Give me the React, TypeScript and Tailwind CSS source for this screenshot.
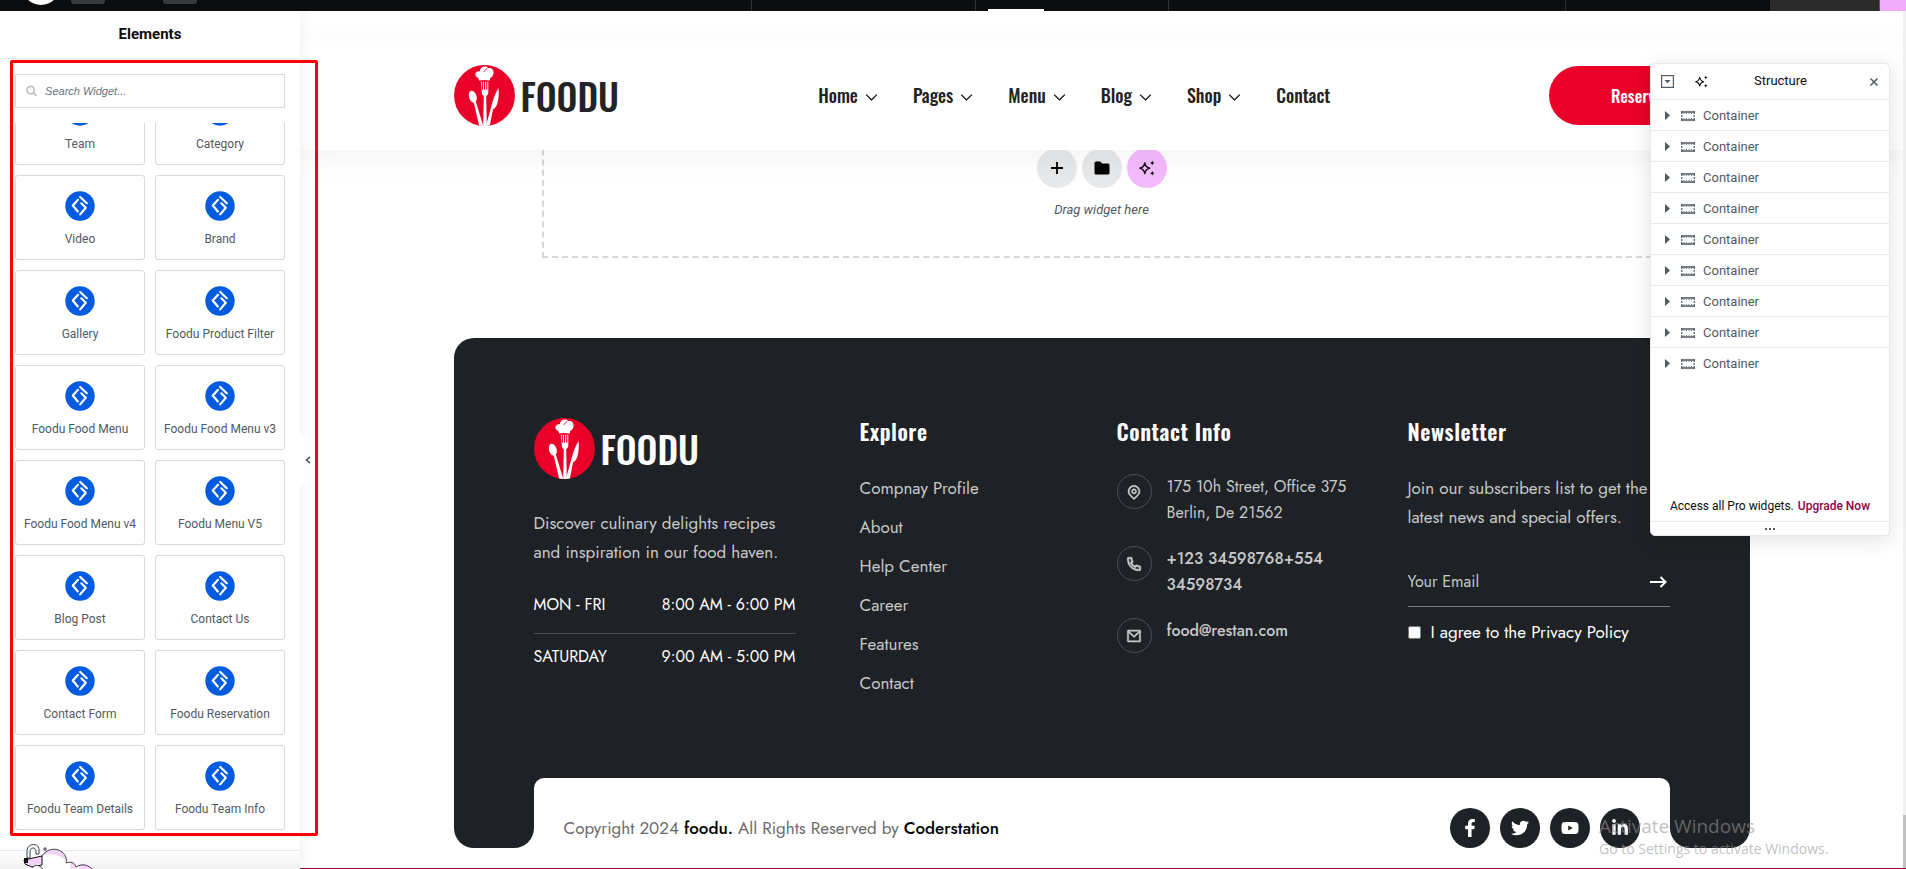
import { BsChevronDown } from 'react-icons/bs';
import { FaFacebookF, FaLinkedinIn, FaTwitter, FaYoutube } from 'react-icons/fa';
import { RiMailLine, RiMapPinLine, RiPhoneLine } from 'react-icons/ri';

const widgets = [
  'Team',
  'Category',
  'Video',
  'Brand',
  'Gallery',
  'Foodu Product Filter',
  'Foodu Food Menu',
  'Foodu Food Menu v3',
  'Foodu Food Menu v4',
  'Foodu Menu V5',
  'Blog Post',
  'Contact Us',
  'Contact Form',
  'Foodu Reservation',
  'Foodu Team Details',
  'Foodu Team Info',
];

const navItems = [
  { label: 'Home', menu: true },
  { label: 'Pages', menu: true },
  { label: 'Menu', menu: true },
  { label: 'Blog', menu: true },
  { label: 'Shop', menu: true },
  { label: 'Contact', menu: false },
];

const exploreLinks = ['Compnay Profile', 'About', 'Help Center', 'Career', 'Features', 'Contact'];

const socials = [
  { label: 'Facebook', icon: <FaFacebookF size={18} /> },
  { label: 'Twitter', icon: <FaTwitter size={18} /> },
  { label: 'YouTube', icon: <FaYoutube size={18} /> },
  { label: 'LinkedIn', icon: <FaLinkedinIn size={18} /> },
];

function WidgetIcon() {
  return (
    <svg width="30" height="30" viewBox="0 0 30 30" fill="none" aria-hidden="true">
      <circle cx="15" cy="15" r="14.7" fill="#005be0" />
      <g stroke="#fff" strokeWidth="2.2" strokeLinecap="round" strokeLinejoin="round">
        <path d="M13 8.800 7.800 14.500l5 6" />
        <path d="M15.200 6 21.800 12.200" />
        <path d="M16.300 12.300 20.800 16.800 15.200 23.400" />
      </g>
    </svg>
  );
}

function SparkleIcon({ size }: { size: number }) {
  return (
    <svg width={size} height={size} viewBox="0 0 16 16" fill="none" aria-hidden="true">
      <path
        d="M5.800 2.800c.6 3.200 1.900 4.700 5 5.400-3.100.7-4.400 2.200-5 5.400-.6-3.200-1.900-4.700-5-5.400 3.100-.7 4.400-2.200 5-5.400Z"
        stroke="currentColor"
        strokeWidth="1.300"
        strokeLinejoin="round"
      />
      <path
        d="M13.300.6c.3 1.600.9 2.200 2.500 2.500-1.600.3-2.200.9-2.500 2.500-.3-1.600-.9-2.200-2.500-2.500 1.600-.3 2.200-.9 2.500-2.500ZM13.300 10.800c.3 1.600.9 2.200 2.500 2.500-1.600.3-2.200.9-2.500 2.500-.3-1.600-.9-2.200-2.500-2.500 1.600-.3 2.200-.9 2.500-2.500Z"
        fill="currentColor"
      />
    </svg>
  );
}

function Logo({ textClass }: { textClass: string }) {
  return (
    <a href="#home" className="flex h-[61px] items-center gap-[6px]">
      <svg width="61" height="61" viewBox="0 0 61 61" aria-hidden="true">
        <defs>
          <clipPath id="disc">
            <circle cx="30.500" cy="30.500" r="30.500" />
          </clipPath>
        </defs>
        <g clipPath="url(#disc)">
          <rect width="61" height="61" fill="#ea0029" />
          <g fill="#fff">
            {/* chef hat */}
            <path d="M25 15.500c-.2-2-.6-2.600-2-3.200-2.200-1.300-2-4.800.4-5.700 1.200-.5 1.800-.3 2.400-.4.3-3 2.400-4.700 5-4.700 1.800 0 2.800.7 3.600 1.600 2.900-.6 5.300 1.500 5.200 4.300 0 2.700-1.500 4.500-3.400 5.600l-.4 2.500c-3.600-.8-7.200-.8-10.800 0Z" />
            {/* fork */}
            <path d="M26.800 16.800h1v8h1.100v-8h1.100v8h1.100v-8h1.100v8h1.100v-8h1v10.700c0 1.900-.9 2.800-2.100 3.500l.6 30h-3.600l.6-30c-1.200-.7-2-1.600-2-3.500Z" />
            {/* spoon */}
            <path d="M16.100 26.300c2-1.700 5 .5 6.300 4.200.8 2.500.6 4.600-.6 6.100L29.300 61h-4.100l-5.400-23.200c-2.100-.4-3.800-2.200-4.600-5-.7-2.700-.4-5.200.9-6.500Z" />
            {/* knife */}
            <path d="M44.500 22.900c.7 4.700.2 11.300-1.300 16-.9 2.700-2 4.300-4.200 5.300L35.800 61h-3.900L37 42.500c1.700-7 4.300-14.500 7.500-19.600Z" />
          </g>
          <path d="M30 7.200c.5-2 1.700-3.200 3.400-3.700" stroke="#ea0029" strokeWidth=".8" fill="none" />
        </g>
      </svg>
      <span className={`font-['Oswald','Roboto_Condensed',sans-serif] text-[37px] leading-[61px] font-medium ${textClass}`}>
        FOODU
      </span>
    </a>
  );
}

function TopBar() {
  return (
    <div className="flex h-[11px] shrink-0 overflow-hidden bg-[#0c0d0e]">
      <div className="flex flex-1 items-end border-r border-[#2d2e30] pl-[22px]">
        <span className="mb-[6px] size-[38px] rounded-full bg-white" />
        <span className="mb-[7px] ml-[11px] h-8 w-[34px] rounded-[3px] bg-[#3a3b3d]" />
        <span className="mb-[7px] ml-[58px] h-8 w-[34px] rounded-[3px] bg-[#3a3b3d]" />
      </div>
      <div className="w-[224px] border-r border-[#2d2e30]" />
      <div className="flex w-[193px] items-end border-r border-[#2d2e30] pl-3">
        <span className="h-[2px] w-14 bg-white" />
      </div>
      <div className="w-[397px] border-r border-[#2d2e30]" />
      <div className="w-[204px]" />
      <div className="w-[110px] border-r border-[#515962] bg-[#2b2b2b]" />
      <div className="w-[26px] bg-[#f0abfc]" />
    </div>
  );
}

function WidgetPanel() {
  return (
    <aside className="relative z-20 flex w-[300px] shrink-0 flex-col bg-white font-['Roboto',sans-serif] shadow-[0_0_15px_rgba(0,0,0,0.08)]">
      <h1 className="h-[48px] border-b border-[#e6e8ea] pt-3 text-center text-[15px] leading-[22px] font-bold text-[#0c0d0e]">
        Elements
      </h1>

      <div className="px-[15px] pt-[15px] pb-[15px]">
        <label className="flex h-[34px] items-center gap-2 border border-[#d5d8dc] pl-[10px]">
          <svg width="12" height="12" viewBox="0 0 12 12" fill="none" stroke="#babfc5" strokeWidth="1.800" aria-hidden="true">
            <circle cx="5" cy="5" r="4" />
            <path d="m8 8 3.300 3.300" />
          </svg>
          <input
            type="search"
            aria-label="Search widget"
            placeholder="Search Widget..."
            className="w-full font-['Liberation_Sans',sans-serif] text-[11px] leading-4 italic outline-none placeholder:text-[#69727d]"
          />
        </label>
      </div>

      {/* Scrolled part way down the widget list */}
      <div className="flex min-h-0 flex-1 flex-col justify-end overflow-hidden px-[15px] pb-5">
        <div className="grid shrink-0 grid-cols-2 gap-[10px]">
          {widgets.map((name) => (
            <button
              key={name}
              type="button"
              className="flex h-[85px] flex-col items-center gap-[11px] rounded-[3px] border border-[#d5d8dc] pt-[15px] text-[12px] leading-[14px] text-[#515962]"
            >
              <WidgetIcon />
              {name}
            </button>
          ))}
        </div>
      </div>

      <div className="relative h-[19px] border-t border-[#e6e8ea] bg-linear-to-b from-white to-[#f1f1f1]">
        <svg className="absolute -top-2 left-5" width="76" height="27" viewBox="0 0 76 27" fill="none" aria-hidden="true">
          <path d="M4 27c1-4 6-6 10-5l8-9c4-6 14-9 20-5 4 2 6 6 5 11 4-2 8 0 9 4 5-3 13-2 17 4Z" fill="#fff" />
          <path d="M22 13c5-8 15-8 20-4 3 2 4 5 4 8-6-5-14-8-24-4ZM50 19c3-1 6 1 6 4l-1 4h-5c1-3 1-6 0-8ZM58 22c6-2 12 1 15 5H60Z" fill="#f5d0f7" />
          <path d="M22 13c4-7 14-9 20-4 4 3 5 7 4 11 5-2 9 0 10 4 6-4 13-2 17 3" stroke="#3f444b" />
          <path d="M7 15V8c0-8 12-9 12-1v4h-3V8c0-4-6-4-6 0v7Z" fill="#fff" stroke="#3f444b" />
          <path d="m4 17 18-4v9l-10 2-7-3Z" fill="#f5d0f7" stroke="#0c0d0e" />
          <path d="M4 15h4v5H4Z" fill="#0c0d0e" />
          <path d="M12 25c3-4 9-3 11 2" fill="#fff" stroke="#3f444b" />
          <path d="M25 4v4M23 6h4" stroke="#3f444b" />
        </svg>
      </div>

      <button
        type="button"
        aria-label="Collapse panel"
        className="absolute top-[424px] left-full flex h-[50px] w-[15px] items-center justify-center bg-white text-[#515962]"
      >
        <svg width="6" height="8" viewBox="0 0 6 8" fill="none" stroke="currentColor" strokeWidth="1.600" aria-hidden="true">
          <path d="M5 .8 1.500 4 5 7.200" />
        </svg>
      </button>
    </aside>
  );
}

function SiteHeader() {
  return (
    <header className="relative z-10 mt-[30px] bg-white py-6 shadow-[0_8px_30px_rgba(0,0,0,0.05)]">
      <div className="mx-auto flex max-w-[1296px] items-center justify-between">
        <Logo textClass="text-[#232323]" />
        <nav className="flex gap-[35px] pr-5 font-['Oswald','Roboto_Condensed',sans-serif] text-[18px] leading-[27px] font-medium text-[#232323]">
          {navItems.map((item) => (
            <a key={item.label} href="#nav" className="flex items-center gap-[7px]">
              {item.label}
              {item.menu && <BsChevronDown size={13} strokeWidth={1} className="mt-1" />}
            </a>
          ))}
        </nav>
        <button
          type="button"
          className="h-[59px] w-[200px] rounded-[30px] bg-[#ea0029] font-['Oswald','Roboto_Condensed',sans-serif] text-[17px] font-medium text-white"
        >
          Reservation
        </button>
      </div>
    </header>
  );
}

function DropZone() {
  return (
    <div className="mx-auto -mt-[42px] flex h-[150px] w-full max-w-[1120px] flex-col items-center border-2 border-dashed border-[#d5d8dc] pt-[38px] font-['Roboto',sans-serif]">
      <div className="flex gap-[5px] text-black">
        <button type="button" aria-label="Add container" className="flex size-10 items-center justify-center rounded-full bg-[#e6e8ea]">
          <svg width="12" height="12" viewBox="0 0 12 12" stroke="currentColor" strokeWidth="1.800" aria-hidden="true">
            <path d="M6 0v12M0 6h12" />
          </svg>
        </button>
        <button type="button" aria-label="Add template" className="flex size-10 items-center justify-center rounded-full bg-[#e6e8ea]">
          <svg width="16" height="14" viewBox="0 0 16 14" fill="currentColor" aria-hidden="true">
            <path d="M2 .5h4.200L8.200 2.500H14a1.500 1.500 0 0 1 1.500 1.500v8A1.500 1.500 0 0 1 14 13.500H2A1.500 1.500 0 0 1 .5 12V2A1.500 1.500 0 0 1 2 .5Z" />
          </svg>
        </button>
        <button type="button" aria-label="Build with AI" className="flex size-10 items-center justify-center rounded-full bg-[#f3bafd]">
          <SparkleIcon size={16} />
        </button>
      </div>
      <p className="mt-[14px] text-[13px] leading-4 text-[#515962] italic">Drag widget here</p>
    </div>
  );
}

function FooterTitle({ children }: { children: React.ReactNode }) {
  return (
    <h2 className="mb-[30px] font-['Oswald','Roboto_Condensed',sans-serif] text-[22px] leading-[26px] font-semibold tracking-wide text-white">
      {children}
    </h2>
  );
}

function ContactRow({ icon, children }: { icon: React.ReactNode; children: React.ReactNode }) {
  return (
    <li className="flex h-[52px] gap-[15px]">
      <span className="flex size-[35px] shrink-0 items-center justify-center rounded-full border border-[#4b4d51]">{icon}</span>
      <span>{children}</span>
    </li>
  );
}

function SiteFooter() {
  return (
    <footer className="mx-auto mt-20 w-full max-w-[1296px] font-['Jost','Lato',sans-serif] text-[17px] leading-[29px] text-[#c7c8c9]">
      <div className="grid grid-cols-[326fr_257fr_291fr_262fr] rounded-t-[20px] bg-[#1e2125] p-20">
        <div className="pr-16">
          <Logo textClass="text-white" />
          <p className="mt-[30px]">
            Discover culinary delights recipes
            <br />
            and inspiration in our food haven.
          </p>
          <dl className="mt-6 text-[16px] leading-[27px] text-white">
            <div className="flex justify-between border-b border-[#4b4d51] pb-[15px]">
              <dt>MON - FRI</dt>
              <dd>8:00 AM - 6:00 PM</dd>
            </div>
            <div className="flex justify-between pt-[9px]">
              <dt>SATURDAY</dt>
              <dd>9:00 AM - 5:00 PM</dd>
            </div>
          </dl>
        </div>

        <div>
          <FooterTitle>Explore</FooterTitle>
          <ul className="flex flex-col gap-[10px]">
            {exploreLinks.map((link) => (
              <li key={link}>
                <a href="#explore">{link}</a>
              </li>
            ))}
          </ul>
        </div>

        <div>
          <FooterTitle>Contact Info</FooterTitle>
          <ul className="flex flex-col gap-5 text-[16px] leading-[26px]">
            <ContactRow icon={<RiMapPinLine size={16} strokeWidth={0.7} />}>
              175 10h Street, Office 375
              <br />
              Berlin, De 21562
            </ContactRow>
            <ContactRow icon={<RiPhoneLine size={18} strokeWidth={0.7} />}>
              <a href="#phone" className="font-medium">
                +123 34598768+554
                <br />
                34598734
              </a>
            </ContactRow>
            <ContactRow icon={<RiMailLine size={16} strokeWidth={0.7} />}>
              <a href="#mail" className="font-medium">
                food@restan.com
              </a>
            </ContactRow>
          </ul>
        </div>

        <div>
          <FooterTitle>Newsletter</FooterTitle>
          <p className="whitespace-nowrap">
            Join our subscribers list to get the
            <br />
            latest news and special offers.
          </p>
          <form>
            <div className="mt-[25px] flex h-[50px] items-center border-b border-[#77797c] pr-[3px]">
              <input
                type="email"
                aria-label="Your email"
                placeholder="Your Email"
                className="w-full min-w-0 flex-1 text-[16px] outline-none placeholder:text-[#c7c8c9]"
              />
              <button type="button" aria-label="Subscribe" className="text-white">
                <svg width="17" height="12" viewBox="0 0 17 12" fill="none" stroke="currentColor" strokeWidth="2" aria-hidden="true">
                  <path d="M0 6h15M10.500 1l5 5-5 5" />
                </svg>
              </button>
            </div>
            <div className="mt-[11px] flex items-center gap-[10px] text-white">
              <input id="privacy" type="checkbox" className="size-[13px]" />
              <label htmlFor="privacy">I agree to the Privacy Policy</label>
            </div>
          </form>
        </div>
      </div>

      <div className="flex h-[70px]">
        <div className="w-20 rounded-b-[20px] bg-[#1e2125]" />
        <div className="flex-1 bg-[#1e2125]">
          <div className="flex h-full items-end justify-between rounded-t-[10px] bg-white px-[30px]">
            <p className="leading-10 text-[#6b6b6b]">
              Copyright 2024 <a href="#foodu" className="font-medium text-black">foodu.</a> All Rights Reserved by{' '}
              <a href="#coderstation" className="font-medium text-black">Coderstation</a>
            </p>
            <div className="flex gap-[10px]">
              {socials.map((s) => (
                <a
                  key={s.label}
                  href="#social"
                  aria-label={s.label}
                  className="flex size-10 items-center justify-center rounded-full bg-[#1e2125] text-white"
                >
                  {s.icon}
                </a>
              ))}
            </div>
          </div>
        </div>
        <div className="w-20 rounded-b-[20px] bg-[#1e2125]" />
      </div>
    </footer>
  );
}

function StructurePanel() {
  return (
    <section className="absolute top-[63px] right-4 z-30 w-[240px] rounded-[5px] border border-[#e6e8ea] bg-white font-['Roboto',sans-serif] text-[#515962] shadow-[0_4px_20px_rgba(0,0,0,0.12)]">
      <div className="flex h-[36px] items-center border-b border-[#e6e8ea] px-[10px]">
        <button type="button" aria-label="Expand all">
          <svg width="13" height="13" viewBox="0 0 13 13" fill="none" aria-hidden="true">
            <rect x=".6" y=".6" width="11.800" height="11.800" stroke="currentColor" strokeWidth="1.200" />
            <path d="M3.500 5h6l-3 3.200Z" fill="currentColor" />
          </svg>
        </button>
        <button type="button" aria-label="AI" className="ml-[21px] text-black">
          <SparkleIcon size={13} />
        </button>
        <h2 className="flex-1 pr-4 pb-px text-center text-[13px] leading-4 text-[#0c0d0e]">Structure</h2>
        <button type="button" aria-label="Close" className="pt-px">
          <svg width="10" height="8" viewBox="0 0 10 8" fill="none" stroke="currentColor" strokeWidth="1.500" aria-hidden="true">
            <path d="m1.500.5 7 7M8.500.5l-7 7" />
          </svg>
        </button>
      </div>
      <ul className="h-[394px]">
        {Array.from({ length: 9 }, (_, i) => (
          <li key={i} className="flex h-[31px] items-center border-b border-[#e6e8ea] pt-px pl-[14px] text-[13px] last:border-transparent">
            <svg width="5" height="9" viewBox="0 0 5 9" fill="currentColor" aria-hidden="true">
              <path d="M0 0v9l5-4.500Z" />
            </svg>
            <svg className="ml-[11px]" width="14" height="10" viewBox="0 0 14 10" fill="none" stroke="currentColor" aria-hidden="true">
              <path d="M0 1h14M0 9h14" strokeWidth="1.600" />
              <path d="M.8 0v10M13.200 0v10" strokeWidth="1.200" strokeDasharray="3 1 2 1 3" />
              <path d="M2.500 2.200h9M2.500 7.800h9" strokeDasharray="1 1.500" />
            </svg>
            <span className="ml-2">Container</span>
          </li>
        ))}
      </ul>
      <p className="flex h-[27px] justify-center gap-1 text-[12px] leading-[24px] whitespace-nowrap text-[#0c0d0e]">
        Access all Pro widgets.{' '}
        <a href="#upgrade" className="font-medium text-[#93003f]">
          Upgrade Now
        </a>
      </p>
      <div className="flex h-[14px] items-center justify-center gap-[2px] border-t border-[#e6e8ea]">
        <i className="size-[2px] bg-[#515962]" />
        <i className="size-[2px] bg-[#515962]" />
        <i className="size-[2px] bg-[#515962]" />
      </div>
    </section>
  );
}

export default function App() {
  return (
    <div className="relative flex h-screen flex-col overflow-hidden bg-white">
      <TopBar />
      <div className="flex min-h-0 flex-1">
        <WidgetPanel />
        <main className="flex min-w-0 flex-1 flex-col border-b border-[#93003f]">
          <div className="flex min-h-0 flex-1">
            <div className="min-w-0 flex-1 overflow-hidden">
              <SiteHeader />
              <DropZone />
              <SiteFooter />
            </div>
            <div className="flex w-[3px] flex-col justify-end bg-[#f0f0f0]">
              <div className="h-[53px] bg-[#c1c1c1]" />
            </div>
          </div>
        </main>
      </div>

      <StructurePanel />

      {/* Highlight around the widget list */}
      <div className="pointer-events-none absolute top-[60px] bottom-[33px] left-[10px] z-40 w-[308px] rounded-[2px] border-3 border-[#ff0000]" />

      {/* System activation notice */}
      <div className="pointer-events-none absolute right-[70px] bottom-[10px] z-40 w-[237px] font-['Open_Sans',sans-serif] whitespace-nowrap text-[#969696]/60">
        <p className="text-[19px] leading-[26px]">Activate Windows</p>
        <p className="text-[14px] leading-[20px]">Go to Settings to activate Windows.</p>
      </div>
    </div>
  );
}
